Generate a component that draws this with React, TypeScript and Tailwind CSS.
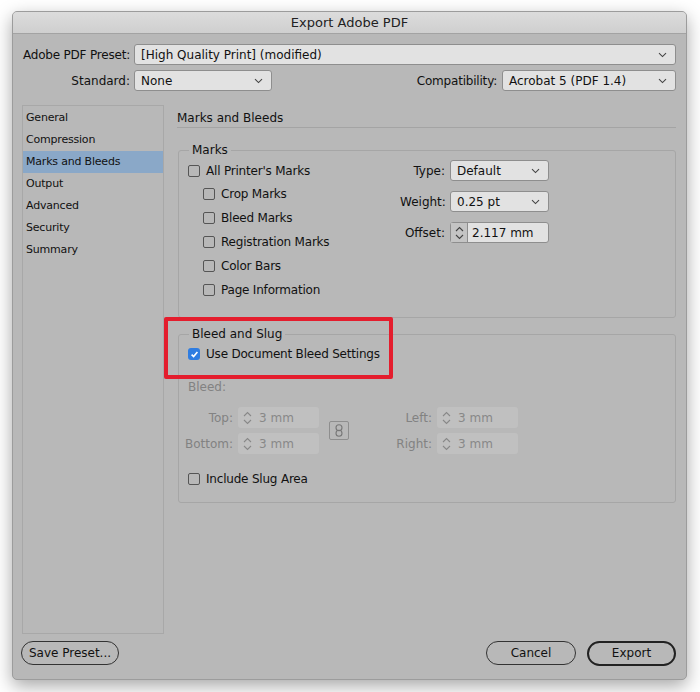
import React from "react";

const font = "font-['DejaVu_Sans','Liberation_Sans',sans-serif]";

function Chevron() {
  return (
    <svg width="9" height="6" viewBox="0 0 9 6" className="shrink-0">
      <path d="M1 1.2 L4.5 4.6 L8 1.2" fill="none" stroke="#444" strokeWidth="1.1" />
    </svg>
  );
}

function Spinner({ color = "#444" }: { color?: string }) {
  return (
    <svg width="9" height="16" viewBox="0 0 9 16" className="shrink-0">
      <path d="M1 6 L4.5 2.5 L8 6" fill="none" stroke={color} strokeWidth="1.1" />
      <path d="M1 10 L4.5 13.5 L8 10" fill="none" stroke={color} strokeWidth="1.1" />
    </svg>
  );
}

function Select({ value, width }: { value: string; width: string }) {
  return (
    <div
      className={`${width} h-[21px] flex items-center justify-between pl-[6px] pr-[8px] bg-[#e2e2e2] border border-[#8e8e8e] rounded-[3px] text-[12px] text-[#111]`}
    >
      <span>{value}</span>
      <Chevron />
    </div>
  );
}

function Checkbox({ checked = false }: { checked?: boolean }) {
  if (checked) {
    return (
      <div className="w-[12px] h-[12px] rounded-[3px] bg-[#2f7de1] flex items-center justify-center shrink-0">
        <svg width="9" height="9" viewBox="0 0 9 9">
          <path d="M1.6 4.6 L3.6 6.6 L7.4 1.9" fill="none" stroke="white" strokeWidth="1.6" />
        </svg>
      </div>
    );
  }
  return <div className="w-[12px] h-[12px] rounded-[2px] border border-[#555] bg-transparent shrink-0" />;
}

function CheckRow({ label, checked, indent }: { label: string; checked?: boolean; indent?: boolean }) {
  return (
    <div className={`flex items-center gap-[6px] h-[24px] ${indent ? "pl-[15px]" : ""}`}>
      <Checkbox checked={checked} />
      <span className="text-[12px] tracking-[-0.2px] text-[#111]">{label}</span>
    </div>
  );
}

function DisabledField({ label, labelW }: { label: string; labelW: string }) {
  return (
    <div className="flex items-center h-[21px]">
      <span className={`${labelW} text-right pr-[5px] text-[12px] text-[#828282]`}>{label}</span>
      <div className="w-[81px] h-[21px] bg-[#c0c0c0] rounded-[3px] flex items-center pl-[5px] gap-[7px] text-[12px] text-[#888]">
        <Spinner color="#888" />
        <span>3 mm</span>
      </div>
    </div>
  );
}

export default function App() {
  const pages = ["General", "Compression", "Marks and Bleeds", "Output", "Advanced", "Security", "Summary"];

  return (
    <div className={`w-[700px] h-[692px] bg-white pt-[11px] pl-[12px] ${font}`}>
      <div className="w-[675px] h-[669px] bg-[#b8b8b8] rounded-[5px] shadow-[0_6px_18px_rgba(0,0,0,0.35)] border border-[#9c9c9c] flex flex-col overflow-hidden">
        <div className="h-[22px] shrink-0 bg-gradient-to-b from-[#dcdcdc] to-[#cfcfcf] border-b border-[#a3a3a3] flex items-center justify-center text-[13px] text-[#222]">
          Export Adobe PDF
        </div>

        <div className="flex flex-col flex-1 pl-[9px] pr-[10px] pt-[10px]">
          <div className="flex items-center h-[21px]">
            <span className="w-[112px] text-right pr-[4px] text-[12px] tracking-[-0.2px] text-[#111]">Adobe PDF Preset:</span>
            <Select value="[High Quality Print] (modified)" width="flex-1" />
          </div>
          <div className="flex items-center h-[21px] mt-[5px]">
            <span className="w-[112px] text-right pr-[4px] text-[12px] text-[#111]">Standard:</span>
            <Select value="None" width="w-[138px]" />
            <span className="flex-1 text-right pr-[5px] text-[12px] tracking-[-0.2px] text-[#111]">Compatibility:</span>
            <Select value="Acrobat 5 (PDF 1.4)" width="w-[174px]" />
          </div>

          <div className="flex flex-1 mt-[14px] gap-[14px]">
            <div className="w-[142px] h-[529px] border border-[#a8a8a8] pt-[1px] flex flex-col">
              {pages.map((p) => (
                <div
                  key={p}
                  className={`h-[22px] pl-[3px] flex items-center text-[11px] tracking-[-0.2px] text-[#111] ${
                    p === "Marks and Bleeds" ? "bg-[#8aa8c8]" : ""
                  }`}
                >
                  {p}
                </div>
              ))}
            </div>

            <div className="flex-1 flex flex-col -ml-[1px]">
              <div className="h-[23px] pt-[4px] text-[12px] text-[#111] border-b border-[#a4a4a4]">Marks and Bleeds</div>

              <div className="relative mt-[22px] ml-[1px] h-[168px] border border-[#a6a6a6] rounded-[3px] pl-[9px] pt-[8px] flex">
                <span className="absolute -top-[9px] left-[10px] px-[3px] bg-[#b8b8b8] text-[12px] text-[#111] leading-[16px]">
                  Marks
                </span>
                <div className="flex flex-col w-[212px]">
                  <CheckRow label="All Printer's Marks" />
                  <div className="-mt-[1px] flex flex-col">
                    <CheckRow label="Crop Marks" indent />
                    <CheckRow label="Bleed Marks" indent />
                    <CheckRow label="Registration Marks" indent />
                    <CheckRow label="Color Bars" indent />
                    <CheckRow label="Page Information" indent />
                  </div>
                </div>
                <div className="flex flex-col gap-[10px] pt-[1px]">
                  <div className="flex items-center">
                    <span className="w-[50px] text-right pr-[5px] text-[12px] text-[#111]">Type:</span>
                    <Select value="Default" width="w-[99px]" />
                  </div>
                  <div className="flex items-center">
                    <span className="w-[50px] text-right pr-[5px] text-[12px] text-[#111]">Weight:</span>
                    <Select value="0.25 pt" width="w-[99px]" />
                  </div>
                  <div className="flex items-center">
                    <span className="w-[50px] text-right pr-[5px] text-[12px] text-[#111]">Offset:</span>
                    <div className="w-[99px] h-[21px] flex bg-[#e2e2e2] border border-[#8e8e8e] rounded-[3px] text-[12px] text-[#111]">
                      <div className="w-[17px] bg-[#c4c4c4] border-r border-[#8e8e8e] flex items-center justify-center">
                        <Spinner />
                      </div>
                      <span className="pl-[4px] self-center">2.117 mm</span>
                    </div>
                  </div>
                </div>
              </div>

              <div className="relative mt-[16px] ml-[1px] h-[169px] border border-[#a6a6a6] rounded-[3px] pl-[9px] pt-[7px] flex flex-col">
                <span className="absolute -top-[9px] left-[10px] px-[3px] bg-[#b8b8b8] text-[12px] text-[#111] leading-[16px]">
                  Bleed and Slug
                </span>
                <CheckRow label="Use Document Bleed Settings" checked />
                <div className="mt-[12px] text-[12px] text-[#828282]">Bleed:</div>
                <div className="flex items-center mt-[11px] -ml-[10px]">
                  <div className="flex flex-col gap-[5px]">
                    <DisabledField label="Top:" labelW="w-[60px]" />
                    <DisabledField label="Bottom:" labelW="w-[60px]" />
                  </div>
                  <div className="ml-[10px] w-[20px] h-[19px] border border-[#8e8e8e] rounded-[2px] flex items-center justify-center">
                    <svg width="8" height="13" viewBox="0 0 8 13">
                      <rect x="1" y="0.8" width="6" height="6" rx="3" fill="none" stroke="#777" strokeWidth="1.1" />
                      <rect x="1" y="6.2" width="6" height="6" rx="3" fill="none" stroke="#777" strokeWidth="1.1" />
                    </svg>
                  </div>
                  <div className="flex flex-col gap-[5px] ml-[22px]">
                    <DisabledField label="Left:" labelW="w-[66px]" />
                    <DisabledField label="Right:" labelW="w-[66px]" />
                  </div>
                </div>
                <div className="mt-[13px]">
                  <CheckRow label="Include Slug Area" />
                </div>
              </div>
            </div>
          </div>

          <div className="flex items-center h-[24px] mt-[5px] mb-[14px] -ml-[1px]">
            <button className="h-[24px] w-[98px] rounded-full border border-[#333] text-[12px] text-[#111]">
              Save Preset...
            </button>
            <div className="flex-1" />
            <button className="h-[24px] w-[90px] rounded-full border border-[#333] text-[12px] text-[#111]">
              Cancel
            </button>
            <button className="h-[25px] w-[89px] ml-[11px] rounded-full border-2 border-[#222] text-[12px] text-[#111]">
              Export
            </button>
          </div>
        </div>
      </div>
      <div className="pointer-events-none absolute left-[164px] top-[317px] w-[229px] h-[62px] border-[4px] border-[#e41d2d] rounded-[2px]" />
    </div>
  );
}
